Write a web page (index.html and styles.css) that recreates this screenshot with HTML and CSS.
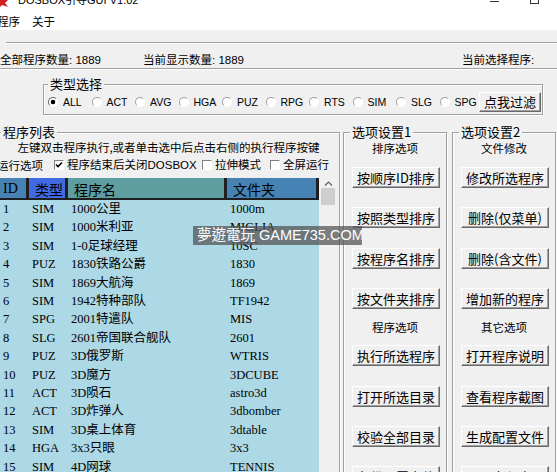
FILE: index.html
```html
<!DOCTYPE html>
<html>
<head>
<meta charset="utf-8">
<title>DOSBOX引导GUI V1.02</title>
<link rel="stylesheet" href="styles.css">
</head>
<body>
<div class="titlebar">
  <svg class="ticon" width="9" height="7" viewBox="0 0 9 7"><path d="M0 0 H8 L5 3 L8 7 L2 5 L0 7 Z" fill="#d42020"/></svg>
  <span class="ttext">DOSBOX引导GUI V1.02</span>
  <span class="tmin"></span><span class="tmax"></span>
</div>
<div class="menubar"><span class="mi">程序</span><span class="mi">关于</span></div>
<div class="sep"></div>
<div class="status"><span class="st1">全部程序数量: 1889</span><span class="st2">当前显示数量: 1889</span><span>当前选择程序:</span></div>
<div class="sep sep2"></div>

<fieldset class="grp types">
  <legend>类型选择</legend>
  <div class="radios">
    <label class="ri"><span class="radio on"></span>ALL</label>
    <label class="ri"><span class="radio"></span>ACT</label>
    <label class="ri"><span class="radio"></span>AVG</label>
    <label class="ri"><span class="radio"></span>HGA</label>
    <label class="ri"><span class="radio"></span>PUZ</label>
    <label class="ri"><span class="radio"></span>RPG</label>
    <label class="ri"><span class="radio"></span>RTS</label>
    <label class="ri"><span class="radio"></span>SIM</label>
    <label class="ri"><span class="radio"></span>SLG</label>
    <label class="ri last"><span class="radio"></span>SPG</label>
    <button class="btn filter">点我过滤</button>
  </div>
</fieldset>

<div class="main">
  <fieldset class="grp list">
    <legend>程序列表</legend>
    <div class="hint">左键双击程序执行,或者单击选中后点击右侧的执行程序按键</div>
    <div class="opts">
      <span class="opl">运行选项</span>
      <span class="cbi w1"><span class="cb"><svg width="8" height="8" viewBox="0 0 8 8"><path d="M1 3.5 L3 5.5 L7 1.5" fill="none" stroke="#000" stroke-width="1.6"/></svg></span>程序结束后关闭DOSBOX</span>
      <span class="cbi w2"><span class="cb"></span>拉伸模式</span>
      <span class="cbi"><span class="cb"></span>全屏运行</span>
    </div>
    <div class="lv">
      <table>
        <colgroup><col class="k1"><col class="k2"><col class="k3"><col class="k4"></colgroup>
        <thead>
          <tr><th class="h1">ID</th><th class="h2">类型</th><th class="h3">程序名</th><th class="h4">文件夹</th></tr>
        </thead>
        <tbody>
          <tr><td>1</td><td>SIM</td><td>1000公里</td><td>1000m</td></tr>
          <tr><td>2</td><td>SIM</td><td>1000米利亚</td><td>MIGLIA</td></tr>
          <tr><td>3</td><td>SIM</td><td>1-0足球经理</td><td>10SC</td></tr>
          <tr><td>4</td><td>PUZ</td><td>1830铁路公爵</td><td>1830</td></tr>
          <tr><td>5</td><td>SIM</td><td>1869大航海</td><td>1869</td></tr>
          <tr><td>6</td><td>SIM</td><td>1942特种部队</td><td>TF1942</td></tr>
          <tr><td>7</td><td>SPG</td><td>2001特遣队</td><td>MIS</td></tr>
          <tr><td>8</td><td>SLG</td><td>2601帝国联合舰队</td><td>2601</td></tr>
          <tr><td>9</td><td>PUZ</td><td>3D俄罗斯</td><td>WTRIS</td></tr>
          <tr><td>10</td><td>PUZ</td><td>3D魔方</td><td>3DCUBE</td></tr>
          <tr><td>11</td><td>ACT</td><td>3D陨石</td><td>astro3d</td></tr>
          <tr><td>12</td><td>ACT</td><td>3D炸弹人</td><td>3dbomber</td></tr>
          <tr><td>13</td><td>SIM</td><td>3D桌上体育</td><td>3dtable</td></tr>
          <tr><td>14</td><td>HGA</td><td>3x3只眼</td><td>3x3</td></tr>
          <tr><td>15</td><td>SIM</td><td>4D网球</td><td>TENNIS</td></tr>
          <tr><td>16</td><td>ACT</td><td>4D拳击</td><td>BOXING</td></tr>
        </tbody>
      </table>
      <div class="sb">
        <div class="sbup"><svg width="9" height="5" viewBox="0 0 9 5"><path d="M1 4.5 L4.5 1 L8 4.5" fill="none" stroke="#606060" stroke-width="1.2"/></svg></div>
        <div class="thumb"></div>
      </div>
    </div>
  </fieldset>

  <fieldset class="grp opt">
    <legend>选项设置1</legend>
    <div class="sub">排序选项</div>
    <button class="btn b1">按顺序ID排序</button>
    <button class="btn">按照类型排序</button>
    <button class="btn">按程序名排序</button>
    <button class="btn">按文件夹排序</button>
    <div class="sub sub2">程序选项</div>
    <button class="btn b5">执行所选程序</button>
    <button class="btn">打开所选目录</button>
    <button class="btn">校验全部目录</button>
    <button class="btn">备份配置文件</button>
  </fieldset>

  <fieldset class="grp opt opt2">
    <legend>选项设置2</legend>
    <div class="sub">文件修改</div>
    <button class="btn b1">修改所选程序</button>
    <button class="btn">删除(仅菜单)</button>
    <button class="btn">删除(含文件)</button>
    <button class="btn">增加新的程序</button>
    <div class="sub sub2">其它选项</div>
    <button class="btn b5">打开程序说明</button>
    <button class="btn">查看程序截图</button>
    <button class="btn">生成配置文件</button>
    <button class="btn">退出程序</button>
  </fieldset>
</div>

<div class="wm">夢遊電玩 GAME735.COM</div>
</body>
</html>
```

FILE: styles.css
```css
* { box-sizing: border-box; }
html, body { margin: 0; padding: 0; }
body {
  width: 557px;
  height: 472px;
  overflow: hidden;
  position: relative;
  background: #f0f0f0;
  color: #000;
  font-family: "Liberation Sans", "Noto Sans CJK SC", sans-serif;
  font-size: 11.5px;
}

/* title + menu */
.titlebar { height: 12px; background: #fff; display: flex; align-items: flex-start; overflow: hidden; }
.ticon { flex: none; display: block; }
.ttext { font-size: 11px; line-height: 12px; margin: -6px 0 0 9px; white-space: nowrap; }
.tmin { width: 9px; height: 1px; background: #333; margin: 1px 0 0 auto; flex: none; }
.tmax { width: 9px; height: 9px; border: 1px solid #333; margin: -5px 18px 0 31px; flex: none; }

.menubar { height: 18px; background: #fff; display: flex; line-height: 18px; font-family: "Noto Sans CJK SC", sans-serif; }
.mi { margin-left: -3px; }
.mi + .mi { margin-left: 12px; }

.sep { height: 2px; border-top: 1px solid #a0a0a0; border-bottom: 1px solid #fff; margin: 12px 0 0 6px; }
.sep2 { margin: 1px 0 0 0; }
.status { display: flex; line-height: 14px; margin-top: 9px; white-space: nowrap; }
.st1 { width: 143px; }
.st2 { width: 319px; }

/* group boxes */
.grp {
  border: 1px solid #a0a0a0;
  box-shadow: inset 1px 1px 0 #fff, 1px 1px 0 #fff;
  margin: 0;
  padding: 0;
  min-width: 0;
}
.grp legend {
  padding: 0 2px;
  font-size: 13px;
  line-height: 16px;
  font-family: "Noto Sans CJK SC", sans-serif;
  background: #f0f0f0;
}

.types { margin: 6px 0 0 43px; width: 500px; padding: 0 1px 2px 4px; }
.radios { display: flex; align-items: center; height: 20px; }
.ri { display: flex; align-items: center; width: 43.5px; flex: none; font-family: "Liberation Sans", sans-serif; font-size: 10.5px; }
.ri.last { width: auto; }
.radio {
  width: 10px; height: 10px; border-radius: 50%;
  border: 1px solid; border-color: #a0a0a0 #fff #fff #a0a0a0;
  background: #fff; margin-right: 5px; flex: none;
}
.radio.on { border-color: #696969 #fff #fff #696969; background: radial-gradient(circle, #000 0 2px, #fff 2.6px); }

.btn {
  display: block;
  width: 88px; height: 21px;
  padding: 0;
  font: 13px/19px "Noto Sans CJK SC", sans-serif;
  color: #000;
  background: #f0f0f0;
  border: 1px solid; border-color: #fff #696969 #696969 #fff;
  box-shadow: inset -1px -1px 0 #a0a0a0;
  white-space: nowrap;
}
.filter { margin-left: auto; width: 62px; height: 20px; line-height: 18px; }

/* main area */
.main { display: flex; align-items: flex-start; margin: 9px 0 0 -3px; }
.list { width: 343px; height: 420px; }
.list legend { margin-left: 3px; }
.opt { width: 104px; height: 420px; margin-left: 3px; }
.opt legend { margin-left: 6px; }
.opt2 { margin-left: 5px; }

.hint { line-height: 14px; height: 14px; text-align: center; white-space: nowrap; font-family: "Noto Sans CJK SC", sans-serif; }
.opts { display: flex; align-items: center; line-height: 14px; margin-top: 4px; white-space: nowrap; }
.opl { width: 57px; margin-left: -1px; font-family: "Noto Sans CJK SC", sans-serif; }
.cbi { display: flex; align-items: center; flex: none; }
.w1 { width: 148px; }
.w2 { width: 68px; }
.cb {
  width: 10px; height: 10px; flex: none;
  border: 1px solid; border-color: #808080 #fff #fff #808080;
  background: #fff; margin-right: 3px;
  display: flex; align-items: center; justify-content: center;
}
.cb svg { display: block; }

.lv { display: flex; margin: 6px 0 0 2px; }
table {
  width: 319px; flex: none;
  border-collapse: separate; border-spacing: 0;
  table-layout: fixed;
  font-family: "Liberation Serif", "Noto Sans CJK SC", serif;
  font-size: 12.5px;
}
.k1 { width: 29px; } .k2 { width: 39px; } .k3 { width: 159px; } .k4 { width: 92px; }
th {
  height: 22px; padding: 0 0 0 6px;
  text-align: left; font-weight: normal; font-size: 14px;
  box-shadow: inset -3px -2px 0 #1f1f1f;
}
.h1 { padding-left: 3px; background: #4682b4; }
.h2 { background: #4169e1; }
.h3 { background: #5f9ea0; }
.h4 { background: #4682b4; }
td {
  height: 18.4px; line-height: 18.4px;
  padding: 0 0 0 3px;
  background: #add8e6;
  white-space: nowrap; overflow: hidden;
}

.sb { width: 18px; flex: none; background: #f0f0f0; display: flex; flex-direction: column; align-items: center; }
.sbup { height: 10px; width: 100%; display: flex; align-items: center; justify-content: center; }
.thumb { width: 14px; height: 17px; background: #cdcdcd; }

.sub { text-align: center; line-height: 16px; height: 16px; font-family: "Noto Sans CJK SC", sans-serif; }
.opt .btn { margin: 19.4px 0 0 8px; }
.opt .b1 { margin-top: 11px; }
.sub2 { margin-top: 10px; }
.opt .b5 { margin-top: 10px; }

/* watermark overlay */
.wm {
  position: absolute; left: 193px; top: 226px;
  width: 169px; height: 19px;
  padding-left: 4px;
  background: rgba(80, 80, 80, 0.72);
  color: #fff;
  font: 14.5px/19px "Liberation Sans", "Noto Sans CJK TC", sans-serif;
  white-space: nowrap; overflow: hidden;
}
```
